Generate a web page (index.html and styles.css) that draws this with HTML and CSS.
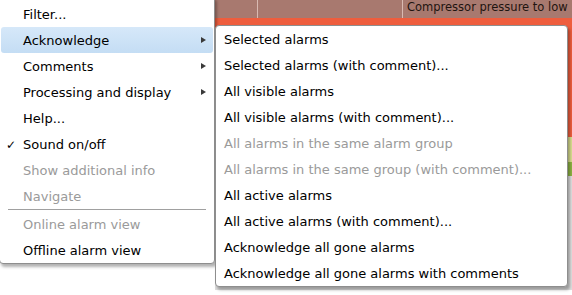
FILE: index.html
```html
<!DOCTYPE html>
<html lang="en">
<head>
    <meta charset="UTF-8">
    <title>Alarm context menu</title>
    <link rel="stylesheet" href="styles.css">
</head>
<body>
    <div class="alarm-grid">
        <div class="row head">
            <div class="cell c1"></div>
            <div class="cell c2"></div>
            <div class="cell c3">Compressor pressure to low</div>
        </div>
        <div class="row red"></div>
        <div class="row yellow"></div>
        <div class="row green"></div>
        <div class="row grey"></div>
    </div>

    <div class="menu main-menu">
        <div class="item">Filter...</div>
        <div class="item active sub">Acknowledge</div>
        <div class="item sub">Comments</div>
        <div class="item sub">Processing and display</div>
        <div class="item">Help...</div>
        <div class="item checked">Sound on/off</div>
        <div class="item disabled">Show additional info</div>
        <div class="item disabled">Navigate</div>
        <div class="separator"></div>
        <div class="item disabled">Online alarm view</div>
        <div class="item">Offline alarm view</div>
    </div>

    <div class="menu sub-menu">
        <div class="item">Selected alarms</div>
        <div class="item">Selected alarms (with comment)...</div>
        <div class="item">All visible alarms</div>
        <div class="item">All visible alarms (with comment)...</div>
        <div class="item disabled">All alarms in the same alarm group</div>
        <div class="item disabled">All alarms in the same group (with comment)...</div>
        <div class="item">All active alarms</div>
        <div class="item">All active alarms (with comment)...</div>
        <div class="item">Acknowledge all gone alarms</div>
        <div class="item">Acknowledge all gone alarms with comments</div>
    </div>
</body>
</html>
```

FILE: styles.css
```css
body {
    margin: 0;
    width: 572px;
    height: 295px;
    overflow: hidden;
    position: relative;
    background-color: #fff;
    font-family: "DejaVu Sans", Verdana, sans-serif;
    font-size: 13px;
    color: #000;
}
.alarm-grid {
    margin-left: 215px;
    display: flex;
    flex-direction: column;
}
.row {
    display: flex;
}
.row.head {
    height: 18px;
    background-color: #a8796f;
}
.cell {
    flex-shrink: 0;
    border-right: 1px solid #d9bab2;
}
.cell.c1 {
    width: 42px;
}
.cell.c2 {
    width: 144px;
}
.cell.c3 {
    flex: 1;
    border-right: none;
    padding-left: 4px;
    font-size: 11.5px;
    line-height: 15px;
    color: #1e1410;
    white-space: nowrap;
}
.row.red {
    height: 119px;
    background-color: #ee5d3d;
}
.row.yellow {
    height: 25px;
    background-color: #d9de8e;
}
.row.green {
    height: 14px;
    background-color: #8db342;
}
.row.grey {
    height: 114px;
    background-color: #dedede;
}
.menu {
    position: absolute;
    background-color: #fff;
    border: 1px solid #8e8e8e;
    border-radius: 4px;
    box-shadow: 2px 3px 3px rgba(0, 0, 0, 0.3);
}
.main-menu {
    left: -1px;
    top: -4px;
    width: 214px;
    padding: 4px 0 0;
}
.sub-menu {
    left: 215px;
    top: 25px;
    width: 351px;
}
.item {
    height: 26px;
    line-height: 28px;
    padding-left: 23px;
    position: relative;
    white-space: nowrap;
}
.sub-menu .item {
    padding-left: 8px;
}
.item.active {
    margin: 0 1px;
    padding-left: 22px;
    border-radius: 3px;
    background: linear-gradient(#d6e8f9, #c4ddf4);
}
.item.disabled {
    color: #9a9a9a;
}
.item.sub::after {
    content: "";
    position: absolute;
    right: 8px;
    top: 10px;
    border-left: 5px solid #3a3a3a;
    border-top: 3.5px solid transparent;
    border-bottom: 3.5px solid transparent;
}
.item.active.sub::after {
    right: 7px;
}
.item.checked::before {
    content: "\2713";
    position: absolute;
    left: 6px;
    font-size: 12px;
}
.separator {
    height: 1px;
    margin: 0 8px 1px;
    background-color: #a0a0a0;
}
```
